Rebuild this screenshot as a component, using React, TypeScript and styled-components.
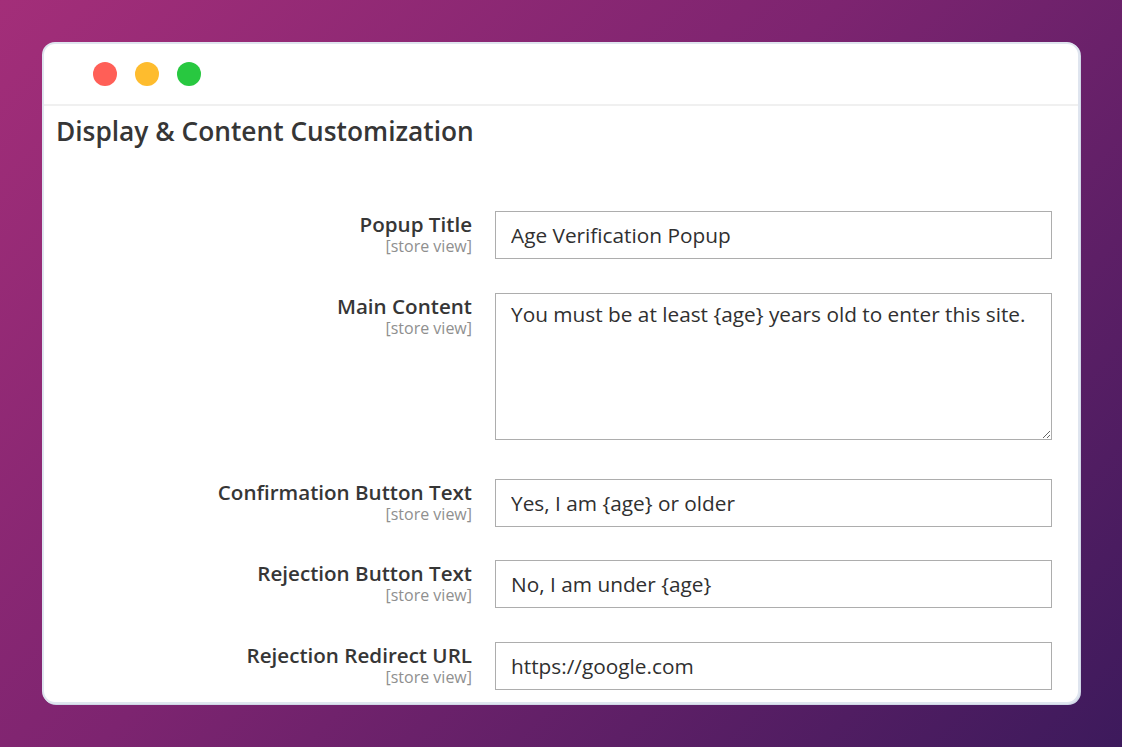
import React from 'react'
import styled, { createGlobalStyle } from 'styled-components'

const GlobalStyle = createGlobalStyle`
  html, body {
    margin: 0;
    padding: 0;
  }

  body {
    width: 1122px;
    height: 747px;
    overflow: hidden;
    background: linear-gradient(135deg, #a32e79 0%, #7d2470 45%, #3d1a5c 100%);
    font-family: 'Open Sans', 'Liberation Sans', sans-serif;
  }
`

interface Field {
  label: string
  value: string
  multiline?: boolean
}

const fields: Field[] = [
  { label: 'Popup Title', value: 'Age Verification Popup' },
  {
    label: 'Main Content',
    value: 'You must be at least {age} years old to enter this site.',
    multiline: true,
  },
  { label: 'Confirmation Button Text', value: 'Yes, I am {age} or older' },
  { label: 'Rejection Button Text', value: 'No, I am under {age}' },
  { label: 'Rejection Redirect URL', value: 'https://google.com' },
]

export default function App(): JSX.Element {
  return (
    <>
      <GlobalStyle />
      <Page>
        <Window>
          <TitleBar>
            <Dot color="#ff5f57" />
            <Dot color="#febc2e" />
            <Dot color="#28c840" />
          </TitleBar>
          <Section>
            <Heading>Display &amp; Content Customization</Heading>
            <Form>
              {fields.map((f) => (
                <Row key={f.label} tall={f.multiline}>
                  <Label>
                    <LabelText>{f.label}</LabelText>
                    <Scope>[store view]</Scope>
                  </Label>
                  {f.multiline ? (
                    <TextArea defaultValue={f.value} readOnly />
                  ) : (
                    <Input defaultValue={f.value} readOnly />
                  )}
                </Row>
              ))}
            </Form>
          </Section>
        </Window>
      </Page>
    </>
  )
}

const Page = styled.div`
  padding: 42px 0 0 42px;
`

const Window = styled.div`
  width: 1034px;
  height: 658px;
  background: #ffffff;
  border: 2px solid #dfe5ef;
  border-radius: 13px;
  box-shadow: 1px 1px 0 #cfd7e6;
  overflow: hidden;
`

const TitleBar = styled.div`
  display: flex;
  align-items: center;
  gap: 18px;
  height: 60px;
  padding-left: 49px;
  border-bottom: 2px solid #f0f0f0;
`

const Dot = styled.span<{ color: string }>`
  width: 24px;
  height: 24px;
  border-radius: 50%;
  background: ${(props) => props.color};
`

const Section = styled.div`
  padding: 9px 26px 0 12px;
`

const Heading = styled.h2`
  margin: 0;
  font-size: 26.3px;
  font-weight: 600;
  line-height: 33px;
  color: #363636;
`

const Form = styled.div`
  display: flex;
  flex-direction: column;
  margin-top: 63px;
`

const Row = styled.div<{ tall?: boolean }>`
  display: grid;
  grid-template-columns: 416px 557px;
  column-gap: 23px;
  margin-bottom: ${(props) => (props.tall ? '39px' : '33.5px')};
`

const Label = styled.div`
  display: flex;
  flex-direction: column;
  align-items: flex-end;
  padding-top: 1px;
`

const LabelText = styled.span`
  font-size: 20.6px;
  font-weight: 600;
  line-height: 25px;
  color: #363636;
`

const Scope = styled.span`
  font-size: 16px;
  line-height: 19px;
  color: #8f8f8f;
`

const Input = styled.input`
  box-sizing: border-box;
  width: 100%;
  height: 48px;
  padding: 0 15px;
  border: 1px solid #adadad;
  border-radius: 0;
  outline: none;
  font-family: 'Open Sans', 'Liberation Sans', sans-serif;
  font-size: 20.8px;
  color: #303030;
  background: #ffffff;
`

const TextArea = styled.textarea`
  box-sizing: border-box;
  width: 100%;
  height: 147px;
  padding: 6px 15px;
  border: 1px solid #adadad;
  border-radius: 0;
  outline: none;
  resize: vertical;
  font-family: 'Open Sans', 'Liberation Sans', sans-serif;
  font-size: 20.8px;
  line-height: 28px;
  color: #303030;
  background: #ffffff;
`
